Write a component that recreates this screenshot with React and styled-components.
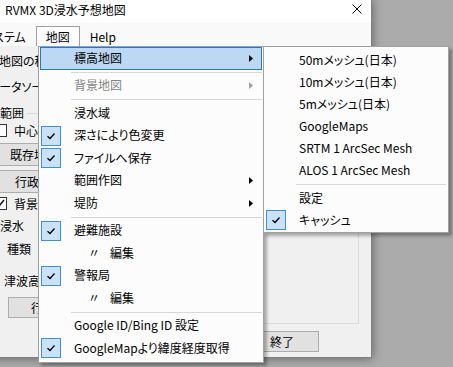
import React from 'react';
import styled, { createGlobalStyle } from 'styled-components';

const GlobalStyle = createGlobalStyle`
  html, body {
    margin: 0;
    padding: 0;
  }
  body {
    background: #ababab;
    font-family: "Noto Sans CJK JP", "Noto Sans", sans-serif;
    font-size: 12px;
    font-feature-settings: "palt";
    color: #000;
  }
`;

const Desktop = styled.div`
  width: 453px;
  height: 367px;
  overflow: hidden;
  background: #ababab;
`;

const Window = styled.div`
  position: relative;
  margin-left: -40px;
  width: 412px;
  height: 358px;
  box-sizing: border-box;
  display: flex;
  flex-direction: column;
  background: #f0f0f0;
  border-right: 1px solid #808080;
  border-bottom: 1px solid #808080;
  box-shadow: 0 0 10px rgba(0, 0, 0, 0.45);
`;

const TitleBar = styled.div`
  height: 23px;
  display: flex;
  align-items: center;
  justify-content: space-between;
  padding: 0 9px 0 45px;
  background: #fff;
  flex-shrink: 0;
`;

const Title = styled.span`
  line-height: 1;
  margin-top: -3px;
`;

const CloseIcon = styled.svg`
  width: 10px;
  height: 10px;
  margin-top: -6px;
`;

const MenuBar = styled.div`
  height: 23px;
  display: flex;
  align-items: flex-end;
  padding-left: 12px;
  background: #f9f9f9;
  flex-shrink: 0;
`;

const MenuBarItem = styled.div`
  height: 20px;
  box-sizing: border-box;
  padding: 0 9px;
  display: flex;
  align-items: center;
  border: 1px solid ${p => (p.$open ? '#a0a0a0' : 'transparent')};
  border-bottom: none;
  background: ${p => (p.$open ? '#fcfcfc' : 'transparent')};
`;

const Client = styled.div`
  flex: 1;
  display: flex;
  gap: 6px;
  padding: 6px 12px 5px 34px;
  min-height: 0;
`;

const LeftPanel = styled.div`
  width: 200px;
  display: flex;
  flex-direction: column;
`;

const Label = styled.div`
  height: 16px;
  display: flex;
  align-items: center;
  margin-top: ${p => p.$mt || 0}px;
  margin-left: ${p => p.$indent || 0}px;
  white-space: nowrap;
`;

const GroupTitle = styled(Label)`
  gap: 3px;
  &::after {
    content: '';
    flex: 1;
    height: 1px;
    background: #dcdcdc;
    margin-top: 2px;
  }
`;

const CheckRow = styled.label`
  height: 16px;
  display: flex;
  align-items: center;
  gap: 7px;
  margin-top: ${p => p.$mt || 0}px;
  white-space: nowrap;
`;

const Box = styled.span`
  width: 13px;
  height: 13px;
  box-sizing: border-box;
  border: 1px solid #333;
  background: #fff;
  display: flex;
  align-items: center;
  justify-content: center;
`;

const Button = styled.div`
  width: ${p => p.$w}px;
  height: ${p => p.$h || 21}px;
  box-sizing: border-box;
  margin-top: ${p => p.$mt || 0}px;
  margin-left: ${p => p.$indent || 0}px;
  background: #e1e1e1;
  border: 1px solid #adadad;
  display: flex;
  align-items: center;
  justify-content: ${p => (p.$left ? 'flex-start' : 'center')};
  padding-left: ${p => (p.$left ? 6 : 0)}px;
  white-space: nowrap;
  flex-shrink: 0;
`;

const RightPanel = styled.div`
  flex: 1;
  display: flex;
  flex-direction: column;
`;

const GroupBox = styled.div`
  flex: 1;
  border: 1px solid #dcdcdc;
`;

const Footer = styled.div`
  display: flex;
  gap: 7px;
  margin-top: 7px;
`;

const MenuPanel = styled.div`
  position: absolute;
  top: ${p => p.$top}px;
  left: ${p => p.$left}px;
  width: ${p => p.$width}px;
  box-sizing: border-box;
  padding: ${p => p.$pad};
  background: #fcfcfc;
  border: 1px solid #a0a0a0;
  box-shadow: 3px 3px 3px rgba(0, 0, 0, 0.3);
  z-index: ${p => p.$z};
`;

const Item = styled.div`
  height: ${p => p.$h}px;
  box-sizing: border-box;
  display: flex;
  align-items: center;
  padding-right: 8px;
  border: 1px solid ${p => (p.$active ? '#1f7ad3' : 'transparent')};
  background: ${p => (p.$active ? '#bcd8f4' : 'transparent')};
  color: ${p => (p.$disabled ? '#858585' : '#000')};
  white-space: nowrap;
`;

const CheckSlot = styled.span`
  width: 20px;
  height: 20px;
  box-sizing: border-box;
  margin-right: 13px;
  flex-shrink: 0;
  display: flex;
  align-items: center;
  justify-content: center;
  border: 1px solid ${p => (p.$on ? '#3d8fe3' : 'transparent')};
  background: ${p => (p.$on ? '#c9e2f8' : 'transparent')};
`;

const ItemText = styled.span`
  flex: 1;
  line-height: 1;
  margin-top: -1px;
`;

const Ditto = styled.span`
  display: inline-block;
  margin: 0 14px 0 14px;
  width: 8px;
`;

const Separator = styled.div`
  height: ${p => p.$h}px;
  display: flex;
  align-items: center;
  padding: 0 ${p => p.$right || 0}px 0 31px;
  &::before {
    content: '';
    flex: 1;
    height: 1px;
    background: #d7d7d7;
  }
`;

const Tick = ({ color = '#000' }) => (
  <svg width="10" height="8" viewBox="0 0 10 8">
    <path d="M1.5 4.2 L4 6.5 L8.5 1.5" fill="none" stroke={color} strokeWidth="1.3" />
  </svg>
);

const Arrow = ({ color = '#000' }) => (
  <svg width="4" height="7" viewBox="0 0 4 7">
    <polygon points="0,0 4,3.5 0,7" fill={color} />
  </svg>
);

const mainMenu = [
  { label: '標高地図', arrow: true, active: true },
  'sep',
  { label: '背景地図', arrow: true, disabled: true },
  'sep',
  { label: '浸水域' },
  { label: '深さにより色変更', checked: true },
  { label: 'ファイルへ保存', checked: true },
  { label: '範囲作図', arrow: true },
  { label: '堤防', arrow: true },
  'sep',
  { label: '避難施設', checked: true },
  { label: '編集', ditto: true },
  { label: '警報局', checked: true },
  { label: '編集', ditto: true },
  'sep',
  { label: 'Google ID/Bing ID 設定' },
  { label: 'GoogleMapより緯度経度取得', checked: true },
];

const subMenu = [
  { label: '50mメッシュ(日本)' },
  { label: '10mメッシュ(日本)' },
  { label: '5mメッシュ(日本)' },
  { label: 'GoogleMaps' },
  { label: 'SRTM 1 ArcSec Mesh' },
  { label: 'ALOS 1 ArcSec Mesh' },
  'sep',
  { label: '設定' },
  { label: 'キャッシュ', checked: true },
];

function MenuItems({ items, itemH, sepH, sepRight }) {
  return items.map((it, i) =>
    it === 'sep' ? (
      <Separator key={i} $h={sepH} $right={sepRight} />
    ) : (
      <Item key={i} $h={itemH} $active={it.active} $disabled={it.disabled}>
        <CheckSlot $on={it.checked}>{it.checked && <Tick />}</CheckSlot>
        <ItemText>
          {it.ditto && <Ditto>〃</Ditto>}
          {it.label}
        </ItemText>
        {it.arrow && <Arrow color={it.disabled ? '#a0a0a0' : '#000'} />}
      </Item>
    )
  );
}

export default function App() {
  return (
    <Desktop>
      <GlobalStyle />
      <Window>
        <TitleBar>
          <Title>RVMX 3D浸水予想地図</Title>
          <CloseIcon viewBox="0 0 10 10">
            <path d="M0.5 0.5 L9.5 9.5 M9.5 0.5 L0.5 9.5" stroke="#000" strokeWidth="1" />
          </CloseIcon>
        </TitleBar>
        <MenuBar>
          <MenuBarItem>システム</MenuBarItem>
          <MenuBarItem $open>地図</MenuBarItem>
          <MenuBarItem>Help</MenuBarItem>
        </MenuBar>
        <Client>
          <LeftPanel>
            <Label $indent={5}>地図の種類</Label>
            <Label $mt={10} $indent={-6}>データソース</Label>
            <GroupTitle $mt={10} $indent={6}>範囲</GroupTitle>
            <CheckRow $mt={2}>
              <Box />
              中心座標
            </CheckRow>
            <Button $w={104} $h={23} $mt={5}>既存地図読込</Button>
            <Button $w={102} $h={23} $mt={4}>行政界選択</Button>
            <CheckRow $mt={2}>
              <Box>
                <svg width="9" height="8" viewBox="0 0 9 8">
                  <path d="M1 4 L3.5 6.5 L8 1" fill="none" stroke="#000" strokeWidth="1.3" />
                </svg>
              </Box>
              背景地図
            </CheckRow>
            <Label $mt={6} $indent={6}>浸水</Label>
            <Label $mt={7} $indent={13}>種類</Label>
            <Label $mt={16} $indent={10}>津波高</Label>
            <Button $w={106} $mt={9} $indent={14}>行政界設定</Button>
          </LeftPanel>
          <RightPanel>
            <GroupBox />
            <Footer>
              <Button $w={56} $left>実行</Button>
              <Button $w={56} $left>終了</Button>
            </Footer>
          </RightPanel>
        </Client>

        <MenuPanel $top={46} $left={78} $width={226} $pad="0 1px 2px" $z={10}>
          <MenuItems items={mainMenu} itemH={22.5} sepH={5} sepRight={0} />
          <MenuPanel $top={-1} $left={224} $width={186} $pad="2px 1px 1px" $z={11}>
            <MenuItems items={subMenu} itemH={22} sepH={6} sepRight={1} />
          </MenuPanel>
        </MenuPanel>
      </Window>
    </Desktop>
  );
}
